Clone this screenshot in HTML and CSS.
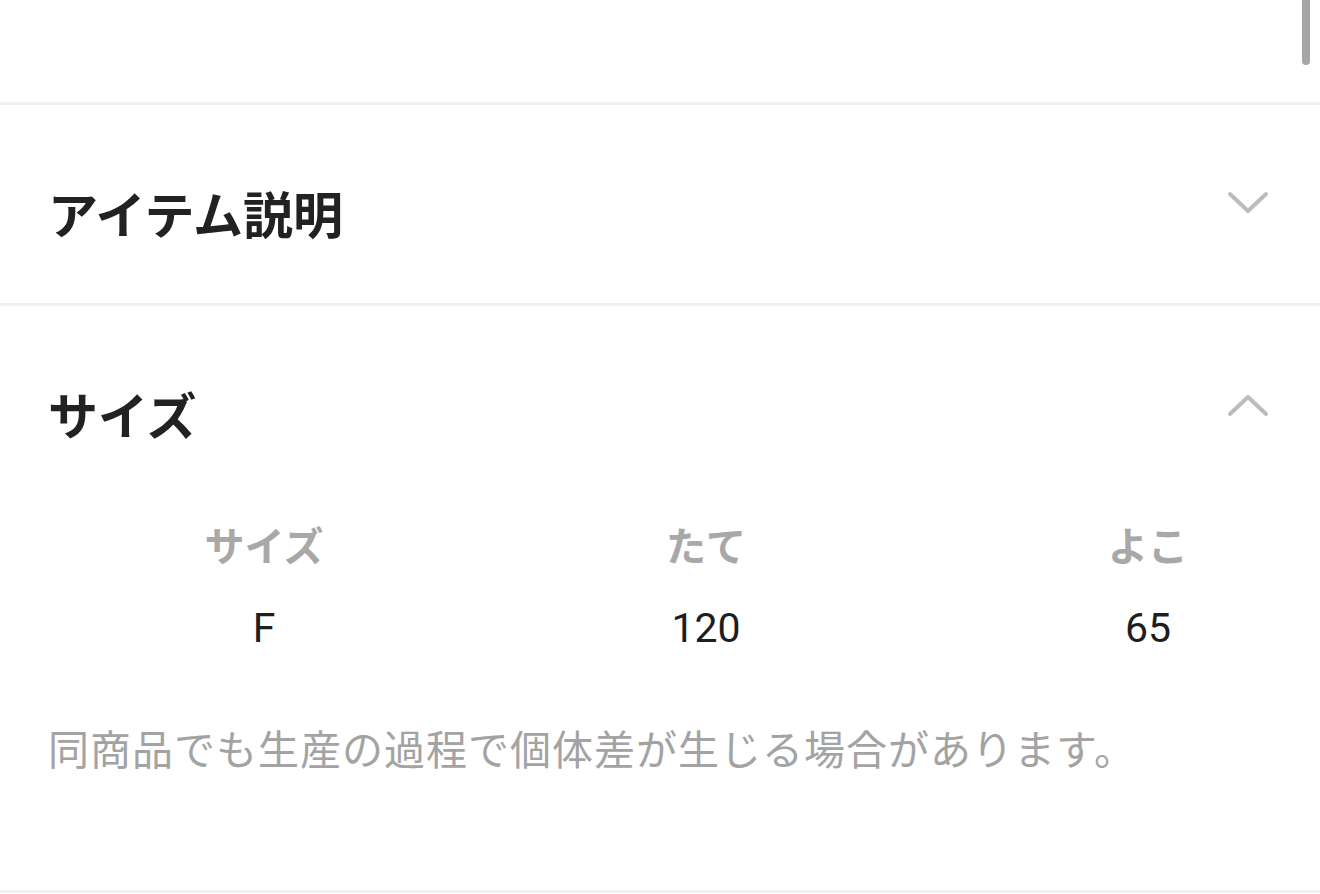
FILE: index.html
```html
<!DOCTYPE html>
<html lang="ja">
<head>
	<meta charset="UTF-8">
	<title>サイズ</title>
	<link rel="stylesheet" href="styles.css">
</head>
<body>

<div class="scrollbar"></div>

<div class="top"></div>

<section class="panel">
	<div class="panel-head">
		<h2>アイテム説明</h2>
		<svg class="chevron" viewBox="0 0 44 26" width="44" height="26"><path d="M4 4 L22 21 L40 4"/></svg>
	</div>
</section>

<section class="panel open">
	<div class="panel-head">
		<h2>サイズ</h2>
		<svg class="chevron up" viewBox="0 0 44 26" width="44" height="26"><path d="M4 22 L22 5 L40 22"/></svg>
	</div>
	<div class="size-table">
		<div class="th">サイズ</div>
		<div class="th">たて</div>
		<div class="th">よこ</div>
		<div class="td">F</div>
		<div class="td">120</div>
		<div class="td">65</div>
	</div>
	<p class="note">同商品でも生産の過程で個体差が生じる場合があります。</p>
</section>

</body>
</html>
```

FILE: styles.css
```css
html, body { margin: 0; padding: 0; background: #fff; overflow: hidden; }
body { font-family: "Noto Sans CJK JP", sans-serif; color: #222; }

.scrollbar { position: absolute; top: 0; right: 10px; width: 8px; height: 65px; background: #a6a6a6; border-radius: 0 0 4px 4px; }

.top { height: 102px; border-bottom: 3px solid #f1f1f1; }

.panel { border-bottom: 3px solid #f1f1f1; padding: 77px 50px 61px 48px; overflow: hidden; }
.panel.open { padding-bottom: 113px; }
.panel-head { display: flex; justify-content: space-between; align-items: flex-start; }
.panel h2 { margin: 0; font-size: 50px; line-height: 60px; font-weight: 700; color: #222; }

.chevron { margin-top: 8px; fill: none; stroke: #bcbcbc; stroke-width: 4; stroke-linecap: round; stroke-linejoin: round; }
.chevron.up { margin-top: 9px; }

.size-table { display: grid; grid-template-columns: repeat(3, 442px); margin: 71px 0 0 -5px; row-gap: 24px; text-align: center; }
.th { font-size: 40px; line-height: 60px; font-weight: 700; color: #a8a8a8; }
.td { font-family: Roboto, "Noto Sans CJK JP", sans-serif; font-size: 41px; line-height: 60px; color: #1e1e1e; }

.note { margin: 59px 0 0; font-size: 41px; line-height: 60px; letter-spacing: 1px; color: #a3a3a3; white-space: nowrap; }
```
